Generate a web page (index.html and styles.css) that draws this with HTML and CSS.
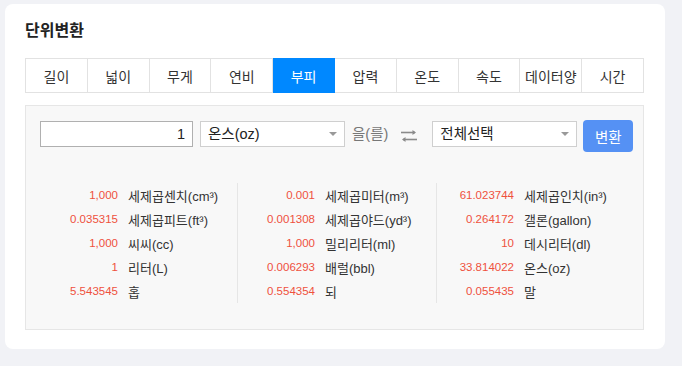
FILE: index.html
```html
<!DOCTYPE html>
<html lang="ko">
<head>
<meta charset="utf-8">
<title>단위변환</title>
<link rel="stylesheet" href="styles.css">
</head>
<body>
<div class="card">
  <h2 class="title">단위변환</h2>
  <div class="tabs">
    <div class="tab">길이</div>
    <div class="tab">넓이</div>
    <div class="tab">무게</div>
    <div class="tab">연비</div>
    <div class="tab active">부피</div>
    <div class="tab">압력</div>
    <div class="tab">온도</div>
    <div class="tab">속도</div>
    <div class="tab">데이터양</div>
    <div class="tab">시간</div>
  </div>
  <div class="panel">
    <div class="controls">
      <div class="input">1</div>
      <div class="select"><span>온스(oz)</span><i class="caret"></i></div>
      <span class="eul">을(를)</span>
      <svg class="swap" width="16" height="12" viewBox="0 0 16 12">
        <path d="M0 3.5H14" stroke="#8a8a8a" stroke-width="1.6"/>
        <path d="M11.5 1L15 3.5L11.5 6Z" fill="#8a8a8a"/>
        <path d="M2 10.5H16" stroke="#8a8a8a" stroke-width="1.6"/>
        <path d="M4.5 8L1 10.5L4.5 13Z" fill="#8a8a8a"/>
      </svg>
      <div class="select sel2"><span>전체선택</span><i class="caret"></i></div>
      <button class="btn">변환</button>
    </div>
    <div class="results">
      <div class="col">
        <div class="row"><span class="num">1,000</span><span class="lbl">세제곱센치(cm³)</span></div>
        <div class="row"><span class="num">0.035315</span><span class="lbl">세제곱피트(ft³)</span></div>
        <div class="row"><span class="num">1,000</span><span class="lbl">씨씨(cc)</span></div>
        <div class="row"><span class="num">1</span><span class="lbl">리터(L)</span></div>
        <div class="row"><span class="num">5.543545</span><span class="lbl">홉</span></div>
      </div>
      <div class="col">
        <div class="row"><span class="num">0.001</span><span class="lbl">세제곱미터(m³)</span></div>
        <div class="row"><span class="num">0.001308</span><span class="lbl">세제곱야드(yd³)</span></div>
        <div class="row"><span class="num">1,000</span><span class="lbl">밀리리터(ml)</span></div>
        <div class="row"><span class="num">0.006293</span><span class="lbl">배럴(bbl)</span></div>
        <div class="row"><span class="num">0.554354</span><span class="lbl">되</span></div>
      </div>
      <div class="col">
        <div class="row"><span class="num">61.023744</span><span class="lbl">세제곱인치(in³)</span></div>
        <div class="row"><span class="num">0.264172</span><span class="lbl">갤론(gallon)</span></div>
        <div class="row"><span class="num">10</span><span class="lbl">데시리터(dl)</span></div>
        <div class="row"><span class="num">33.814022</span><span class="lbl">온스(oz)</span></div>
        <div class="row"><span class="num">0.055435</span><span class="lbl">말</span></div>
      </div>
    </div>
  </div>
</div>
</body>
</html>
```
FILE: styles.css
```css
* { box-sizing: border-box; }
html, body { margin: 0; }
body {
  background: #f1f2f6;
  padding: 4px 0 0 5px;
  font-family: "Liberation Sans", "Noto Sans CJK KR", sans-serif;
  color: #333;
}
.card {
  width: 660px;
  background: #fff;
  border-radius: 8px;
  padding: 18px 20px 19px 20px;
}
.title {
  margin: 0 0 18px 0;
  font-size: 16px;
  line-height: 18px;
  font-weight: bold;
  color: #222;
}
.tabs {
  display: grid;
  grid-template-columns: repeat(10, 1fr);
  width: 619px;
  border-left: 1px solid #e2e2e2;
}
.tab {
  height: 35px;
  border: 1px solid #e2e2e2;
  border-left: 0;
  display: flex;
  align-items: center;
  justify-content: center;
  font-size: 14px;
  color: #333;
  white-space: nowrap;
}
.tab.active {
  background: #0088ff;
  border-color: #0088ff;
  color: #fff;
}
.panel {
  margin-top: 12px;
  width: 619px;
  background: #f8f8f8;
  border: 1px solid #e6e6e6;
  padding: 14px 14px 26px 14px;
}
.controls {
  display: flex;
  align-items: flex-start;
  height: 32px;
}
.controls > * { flex-shrink: 0; }
.input {
  margin-top: 1px;
  width: 153px;
  height: 26px;
  background: #fff;
  border: 1px solid #b0b0b0;
  font-size: 14.5px;
  line-height: 24px;
  text-align: right;
  padding-right: 7px;
  color: #222;
}
.select {
  margin-top: 1px;
  margin-left: 7px;
  width: 145px;
  height: 26px;
  background: #fff;
  border: 1px solid #cfcfcf;
  font-size: 14.5px;
  line-height: 24px;
  padding: 0 7px;
  display: flex;
  justify-content: space-between;
  align-items: center;
  color: #222;
  white-space: nowrap;
}
.caret {
  width: 0;
  height: 0;
  border-left: 4px solid transparent;
  border-right: 4px solid transparent;
  border-top: 4px solid #999;
}
.eul {
  margin-top: 1px;
  margin-left: 7px;
  font-size: 14.5px;
  line-height: 26px;
  color: #777;
  white-space: nowrap;
}
.swap {
  margin-left: 13px;
  margin-top: 9px;
  overflow: visible;
}
.sel2 { margin-left: 15px; }
.btn {
  margin-left: 6px;
  width: 50px;
  height: 32px;
  border: 0;
  border-radius: 4px;
  background: #5591f4;
  color: #fff;
  font-family: "Liberation Sans", "Noto Sans CJK KR", sans-serif;
  font-size: 14.5px;
  padding: 0;
}
.results {
  margin-top: 31px;
  display: grid;
  grid-template-columns: 197px 199px 1fr;
}
.col {
  border-left: 1px solid #e6e6e6;
}
.col:first-child {
  border-left: 0;
  padding-left: 1px;
}
.row {
  display: flex;
  align-items: center;
  height: 24px;
}
.num {
  width: 77px;
  text-align: right;
  font-size: 11.5px;
  color: #ef513d;
}
.lbl {
  margin-left: 10px;
  font-size: 13px;
  color: #333;
  white-space: nowrap;
}
```
